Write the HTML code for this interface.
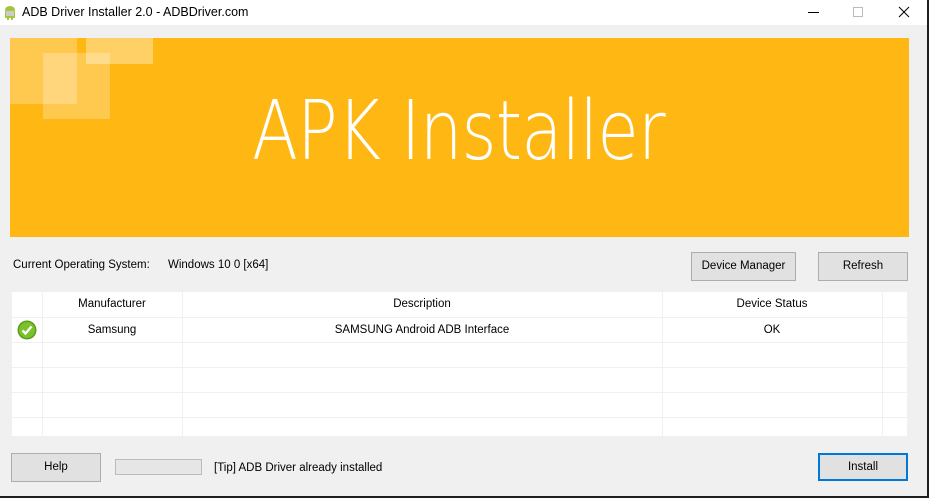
<!DOCTYPE html>
<html><head><style>
*{margin:0;padding:0;box-sizing:border-box}
body{width:929px;height:498px;background:#1e1e1e;font-family:"Liberation Sans",sans-serif;font-size:11.5px;color:#000;position:relative;overflow:hidden}
.win{position:absolute;left:0;top:0;width:927px;height:496px;background:#f0f0f0}
.title{position:absolute;left:0;top:0;width:927px;height:25px;background:#fff}
.abs{position:absolute}
.btn{position:absolute;background:#e1e1e1;border:1px solid #adadad;text-align:center;font-size:11.5px}
.banner{position:absolute;left:10px;top:38px;width:899px;height:199px;background:#ffb714;overflow:hidden}
.sq{position:absolute;background:rgba(255,255,255,0.25)}
.tw{position:absolute;left:12px;top:292px;width:896px;height:144px;overflow:hidden;background:#fff}
table{width:896px;border-collapse:collapse;background:#fff;table-layout:fixed}
td{border-right:1px solid #f0f0f0;border-bottom:1px solid #f0f0f0;text-align:center;font-size:11.5px;height:25px;padding:0;line-height:12px}
</style></head><body>
<div class="win">
<div class="title">
<svg class="abs" style="left:3px;top:5px" width="14" height="16" viewBox="0 0 14 16"><rect x="2" y="5" width="10" height="8" rx="1" fill="#a4c639"/><path d="M2 5a5 4 0 0 1 10 0z" fill="#a4c639"/><rect x="3" y="6" width="8" height="5" fill="#ccc"/><rect x="4" y="12" width="2" height="3" fill="#a4c639"/><rect x="8" y="12" width="2" height="3" fill="#a4c639"/></svg>
<div class="abs" style="left:22px;top:5px;font-size:12.5px">ADB Driver Installer 2.0 - ADBDriver.com</div>
<div class="abs" style="left:808px;top:12px;width:11px;height:1px;background:#000"></div>
<div class="abs" style="left:853px;top:7px;width:10px;height:10px;border:1px solid #bbb"></div>
<svg class="abs" style="left:898px;top:6px" width="12" height="12"><path d="M1 1L11 11M11 1L1 11" stroke="#000" stroke-width="1"/></svg>
</div>
<div class="banner">
<div class="sq" style="left:0;top:0;width:67px;height:66px"></div>
<div class="sq" style="left:33px;top:15px;width:67px;height:66px"></div>
<div class="sq" style="left:76px;top:0;width:67px;height:26px;background:rgba(255,255,255,0.35)"></div>
<div class="abs" style="left:242px;top:46px;font-size:82px;color:#fff;letter-spacing:-1px;font-family:'DejaVu Sans','Liberation Sans',sans-serif;font-weight:200;transform:scaleX(0.82);transform-origin:left;white-space:nowrap">APK Installer</div>
</div>
<div class="abs" style="left:13px;top:259px">Current Operating System:</div>
<div class="abs" style="left:168px;top:259px">Windows 10 0 [x64]</div>
<div class="btn" style="left:691px;top:252px;width:105px;height:29px;line-height:27px">Device Manager</div>
<div class="btn" style="left:818px;top:252px;width:90px;height:29px;line-height:27px">Refresh</div>
<div class="tw">
<table>
<colgroup><col style="width:30px"><col style="width:140px"><col style="width:480px"><col style="width:220px"><col></colgroup>
<tr><td style="height:23px"></td><td>Manufacturer</td><td>Description</td><td>Device Status</td><td></td></tr>
<tr><td><svg width="20" height="20" viewBox="0 0 20 20" style="display:block;margin:0 auto"><circle cx="10" cy="10" r="9.5" fill="#5a9e1a"/><circle cx="10" cy="10" r="8" fill="#7cc12a"/><path d="M5.5 10.5l3 3 6-7" stroke="#fff" stroke-width="2.4" fill="none"/></svg></td><td>Samsung</td><td>SAMSUNG Android ADB Interface</td><td>OK</td><td></td></tr>
<tr><td></td><td></td><td></td><td></td><td></td></tr>
<tr><td></td><td></td><td></td><td></td><td></td></tr>
<tr><td></td><td></td><td></td><td></td><td></td></tr>
<tr><td></td><td></td><td></td><td></td><td></td></tr>
</table>
</div>
<div class="btn" style="left:11px;top:453px;width:90px;height:29px;line-height:27px">Help</div>
<div class="abs" style="left:115px;top:459px;width:87px;height:16px;background:#e6e6e6;border:1px solid #bcbcbc"></div>
<div class="abs" style="left:214px;top:462px">[Tip] ADB Driver already installed</div>
<div class="btn" style="left:818px;top:453px;width:90px;height:28px;line-height:24px;border:2px solid #0078d7">Install</div>
</div>
</body></html>
